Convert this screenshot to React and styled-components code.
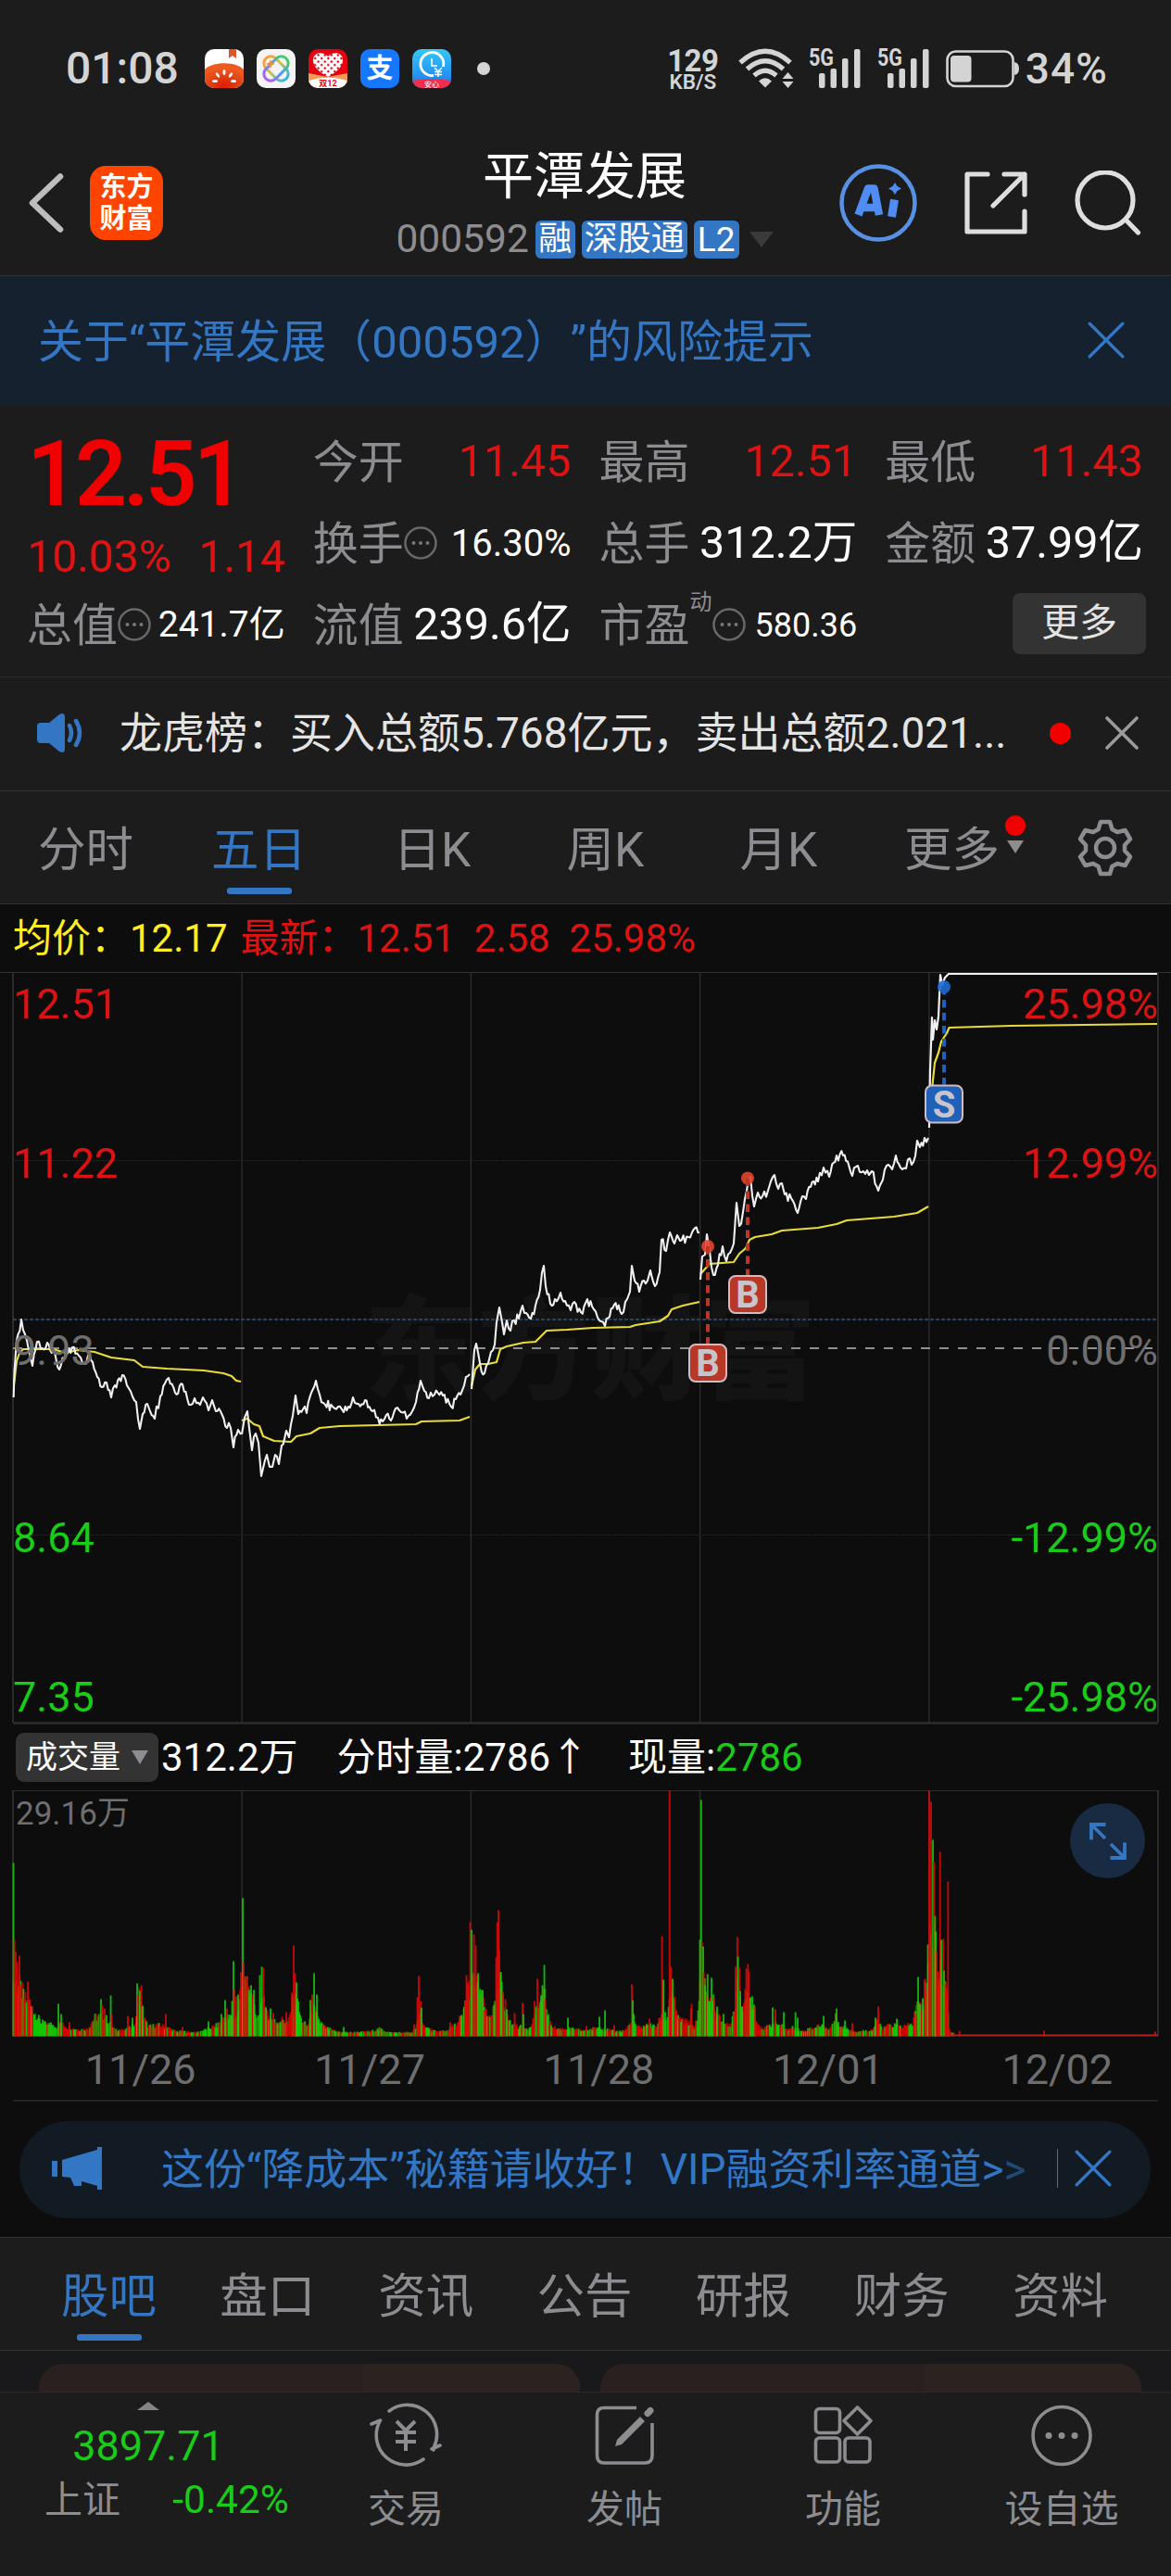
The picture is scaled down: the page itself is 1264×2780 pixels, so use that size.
import styled, { createGlobalStyle, css } from 'styled-components';

const GlobalStyle = createGlobalStyle`
  * {
    box-sizing: border-box;
  }

  body {
    margin: 0;
    background: #1c1c1c;
    font-family: Roboto, 'Noto Sans CJK SC', sans-serif;
    text-spacing-trim: space-all;
    color: #fff;
  }

  svg {
    display: block;
    flex-shrink: 0;
  }
`;

const BLUE = '#3376c4';
const RED = '#dd1212';
const GREEN = '#18cc18';
const GRAY = '#8c8c91';

const Screen = styled.div`
  width: 1264px;
  height: 2780px;
  display: flex;
  flex-direction: column;
  overflow: hidden;
  background: #0d0d0d;
  line-height: 1;
  white-space: nowrap;
`;

/* ---------- status bar ---------- */

const StatusBar = styled.div`
  height: 148px;
  display: flex;
  align-items: center;
  justify-content: space-between;
  padding: 0 68px 0 71px;
  background: #1c1c1c;
  color: #d4d4d4;
`;

const StatusGroup = styled.div`
  display: flex;
  align-items: center;
`;

const Clock = styled.span`
  width: 150px;
  font-size: 48px;
  font-weight: 500;
`;

const AppIcons = styled.div`
  display: flex;
  gap: 14px;
  margin-right: 28px;
`;

const Dot = styled.span`
  width: ${({ $size }) => $size}px;
  height: ${({ $size }) => $size}px;
  border-radius: 50%;
  background: ${({ $color }) => $color};
`;

const Speed = styled.div`
  display: flex;
  flex-direction: column;
  align-items: center;
  width: 56px;
  margin-right: 21px;
  font-weight: 700;
  font-size: 33px;
  line-height: 27px;
  letter-spacing: -0.5px;

  small {
    font-size: 22.5px;
    line-height: 18px;
    letter-spacing: 0;
    font-weight: 600;
  }
`;

const Percent = styled.span`
  margin-left: 7px;
  font-size: 46px;
  font-weight: 500;
  letter-spacing: 1px;
`;

/* ---------- header ---------- */

const Header = styled.header`
  height: 150px;
  display: grid;
  grid-template-columns: 1fr auto 1fr;
  padding: 10px 32px 0 30px;
  border-bottom: 1px solid #2b333c;
  background: #1c1c1c;
`;

const HeaderSide = styled.div`
  display: flex;
  height: 121px;
  align-items: center;
  justify-content: ${({ $end }) => ($end ? 'flex-end' : 'flex-start')};
`;

const Logo = styled.div`
  width: 79px;
  height: 80px;
  margin-left: 27px;
  padding-top: 6px;
  border-radius: 17px;
  background: #ff4400;
  text-align: center;
  font-size: 29px;
  font-weight: 700;
  line-height: 34px;
`;

const TitleBlock = styled.div`
  display: flex;
  flex-direction: column;
  align-items: center;
  padding-top: 1px;
`;

const Title = styled.h1`
  margin: 0;
  font-size: 55px;
  font-weight: 400;
  line-height: 62px;
`;

const SubTitle = styled.div`
  display: flex;
  align-items: center;
  gap: 7px;
  margin-top: 17px;
  height: 41px;
`;

const Code = styled.span`
  font-size: 42.5px;
  color: ${GRAY};
`;

const Tag = styled.span`
  height: 41px;
  padding: 0 3px;
  min-width: 43px;
  border-radius: 6px;
  background: ${BLUE};
  text-align: center;
  font-size: ${({ $latin }) => ($latin ? 37 : 36)}px;
  line-height: 41px;
  ${({ $latin }) => $latin && css`padding: 0 4px;`}
`;

const Triangle = styled.span`
  border-left: ${({ $w }) => $w / 2}px solid transparent;
  border-right: ${({ $w }) => $w / 2}px solid transparent;
  ${({ $up, $h, $color }) =>
    $up ? `border-bottom: ${$h}px solid ${$color};` : `border-top: ${$h}px solid ${$color};`}
`;

const TitleArrow = styled(Triangle)`
  margin-left: 4px;
`;

/* ---------- risk banner ---------- */

const Banner = styled.div`
  height: 140px;
  display: flex;
  align-items: center;
  justify-content: space-between;
  padding: 0 50px 3px 41px;
  background: #15212f;
  color: ${BLUE};
  font-size: 49px;
`;

const BannerText = styled.span`
  padding-top: 5px;
`;

/* ---------- quote ---------- */

const Quote = styled.section`
  height: 293px;
  display: grid;
  grid-template-columns: repeat(4, 1fr);
  grid-template-rows: repeat(3, 88px);
  column-gap: 30px;
  padding: 16px 30px 0 29px;
  border-bottom: 1px solid #292929;
  background: #1c1c1c;
`;

const PriceBlock = styled.div`
  grid-row: span 2;
  display: flex;
  flex-direction: column;
  color: ${RED};
`;

const Price = styled.div`
  height: 122px;
  font-size: 98px;
  font-weight: 600;
  line-height: 116px;
  letter-spacing: -4px;
  color: #f00000;
`;

const PriceChange = styled.div`
  display: flex;
  justify-content: space-between;
  font-size: 48px;
  line-height: 50px;
`;

const Cell = styled.div`
  display: flex;
  align-items: center;
`;

const CellLabel = styled.span`
  padding-top: 2px;
  font-size: 49px;
  color: ${GRAY};
`;

const CellValue = styled.span`
  margin-left: auto;
  padding-top: 1px;
  font-size: ${({ $size }) => $size || 48.5}px;
  color: ${({ $color }) => $color || '#fff'};
`;

const Sup = styled.sup`
  align-self: flex-start;
  width: 24px;
  margin-top: 8px;
  font-size: 24px;
  line-height: 24px;
  color: ${GRAY};
`;

const MoreButton = styled.button`
  width: 144px;
  height: 66px;
  margin: 0 -3px 3px auto;
  padding: 0;
  border: 0;
  border-radius: 8px;
  background: #333;
  color: #e4e4e4;
  font: inherit;
  font-size: 41px;
`;

/* ---------- news ---------- */

const News = styled.div`
  height: 123px;
  display: flex;
  align-items: center;
  justify-content: space-between;
  padding: 0 35px 2px 39px;
  border-bottom: 1px solid #323232;
  background: #1c1c1c;
`;

const NewsText = styled.span`
  width: 967px;
  font-size: 46px;
  color: #e4e4e4;
`;

/* ---------- tabs ---------- */

const Tabs = styled.nav`
  height: ${({ $h }) => $h}px;
  display: flex;
  padding: 0 ${({ $pad }) => $pad || 0}px;
  border-top: ${({ $top }) => ($top ? '1px solid #323232' : '0')};
  border-bottom: 1px solid #323232;
  background: #1c1c1c;
`;

const Tab = styled.div`
  position: relative;
  width: ${({ $w }) => $w}px;
  padding: 34px 2px 0 0;
  text-align: center;
  font-size: 51.5px;
  line-height: 60px;
  color: ${({ $active }) => ($active ? BLUE : GRAY)};

  ${({ $active }) =>
    $active &&
    css`
      &::after {
        content: '';
        position: absolute;
        left: 50%;
        bottom: 10px;
        width: 70px;
        height: 7px;
        margin-left: -36px;
        border-radius: 3px;
        background: ${BLUE};
      }
    `}
`;

const TabBadge = styled.span`
  position: absolute;
  top: 26px;
  right: 15px;
  display: flex;
  flex-direction: column;
  align-items: center;
  gap: 5px;
`;

const GearSlot = styled.div`
  display: flex;
  flex: 1;
  align-items: center;
  justify-content: center;
`;

/* ---------- chart ---------- */

const Legend = styled.div`
  height: 73px;
  display: flex;
  align-items: center;
  padding: 0 14px;
  font-size: 42px;
  white-space: pre;
  color: #ffee22;

  span {
    margin-left: 14px;
    color: ${RED};
  }
`;

const VolumeBar = styled.div`
  height: 71px;
  display: flex;
  align-items: center;
  padding: 0 17px 0;
  font-size: 42px;
`;

const VolumePicker = styled.div`
  width: 154px;
  height: 53px;
  display: flex;
  align-items: center;
  justify-content: space-between;
  margin-right: 3px;
  padding: 0 11px 1px 11px;
  border-radius: 9px;
  background: #333;
  font-size: 34px;
`;

const VolumeItem = styled.span`
  margin-right: ${({ $gap }) => $gap || 0}px;
  color: ${({ $color }) => $color || '#fff'};
`;

const VolumeWrap = styled.div`
  position: relative;
  height: 266px;
`;

const ExpandButton = styled.div`
  position: absolute;
  top: 14px;
  right: 28px;
  width: 81px;
  height: 81px;
  display: flex;
  align-items: center;
  justify-content: center;
  border-radius: 50%;
  background: #182b42;
`;

const Dates = styled.div`
  height: 70px;
  display: grid;
  grid-template-columns: repeat(5, 247.4px);
  margin: 0 14px;
  padding: 13px 0 0 14px;
  border-bottom: 2px solid #232323;
  text-align: center;
  font-size: 45px;
  line-height: 46px;
  color: #6e6e6e;
`;

/* ---------- promo ---------- */

const Promo = styled.div`
  height: 105px;
  display: flex;
  align-items: center;
  margin: 21px 22px 20px 21px;
  padding: 0 42px 3px 35px;
  border-radius: 54px;
  background: #121b24;
  color: ${BLUE};
`;

const PromoText = styled.span`
  width: 965px;
  margin-left: 64px;
  padding-top: 1px;
  font-size: 46px;

  i {
    font-style: normal;
    opacity: 0.5;
  }
`;

const PromoDivider = styled.span`
  width: 1px;
  height: 42px;
  margin: 0 18px 0 2px;
  background: ${BLUE};
`;

/* ---------- feed and bottom bar ---------- */

const Feed = styled.div`
  height: 44px;
  display: grid;
  grid-template-columns: 1fr 1fr;
  gap: 22px;
  padding: 14px 32px 0 42px;
  background: #19191b;
`;

const FeedCard = styled.div`
  border-radius: 26px 26px 0 0;
  background: linear-gradient(90deg, #2a201f 60%, #2c2321 60%);
`;

const BottomBar = styled.footer`
  flex: 1;
  display: flex;
  border-top: 1px solid #2a2a2a;
  background: #1c1c1c;
`;

const IndexBlock = styled.div`
  width: 320px;
  display: flex;
  flex-direction: column;
  align-items: center;
  padding-top: 10px;
  color: ${GREEN};
`;

const IndexValue = styled.div`
  margin-top: 16px;
  font-size: 45px;
  line-height: 46px;
`;

const IndexRow = styled.div`
  display: flex;
  width: 264px;
  align-items: center;
  justify-content: space-between;
  align-self: flex-start;
  margin: 11px 0 0 48px;
  font-size: 42.5px;
  line-height: 48px;

  span {
    font-size: 41px;
    color: ${GRAY};
  }
`;

const NavItem = styled.div`
  width: 236px;
  display: flex;
  flex-direction: column;
  align-items: center;
  padding-top: 7px;
  font-size: 41px;
  line-height: 48px;
  color: ${GRAY};

  svg {
    margin-bottom: 17px;
  }
`;

/* ---------- data ---------- */

const TOP = 1050;
const BOTTOM = 1859;
const LEFT = 14;
const RIGHT = 1250;
const DAY = (RIGHT - LEFT) / 5;

const days = ['11/26', '11/27', '11/28', '12/01', '12/02'];

const priceLines = [
  '14.7,1508 15.5,1480 18,1446 23,1424 27,1440 31,1457 35,1474 40,1448 46,1455 51,1449 59,1459 64,1478 71,1461 78,1454 85,1463 91,1472 95,1463 100,1470 105,1486 110,1497 115,1492 120,1508 124,1495 132,1484 137,1495 143,1507 147,1513 151,1542 154,1526 159,1515 162,1523 167,1531 173,1507 178,1493 182,1487 189,1503 197,1494 204,1516 210,1509 216,1516 219,1508 225,1522 229,1511 233,1523 238,1523 245,1541 249,1541 252,1562 257,1543 260,1548',
  '261,1548 264,1530 267,1523 269,1541 272,1565 276,1547 279,1557 282,1593 286,1576 288,1570 291,1583 294,1583 297,1570 301,1580 304,1560 309,1544 312,1551 316,1528 319,1506 322,1526 327,1521 331,1525 336,1503 341,1490 345,1505 351,1516 359,1518 365,1518 371,1524 376,1518 381,1508 387,1515 394,1511 402,1523 408,1530 413,1534 417,1527 422,1533 427,1520 433,1524 439,1531 445,1523 449,1513 454,1490 458,1501 463,1509 469,1505 478,1506 487,1518 492,1510 497,1505 503,1486 507,1483',
  '509,1499 512,1457 514,1450 518,1471 523,1482 527,1471 530,1459 534,1451 536,1427 539,1411 542,1427 544,1440 547,1425 551,1436 555,1425 560,1423 564,1409 568,1417 573,1423 578,1409 583,1392 587,1366 589,1388 594,1407 599,1402 605,1395 610,1404 616,1414 620,1405 627,1416 634,1402 641,1413 647,1425 653,1431 658,1421 663,1408 671,1418 677,1402 680,1394 682,1366 685,1382 690,1394 695,1382 699,1382 702,1371 707,1388 712,1373 714,1338 719,1350 723,1330 728,1342 731,1333 734,1339 743,1335 747,1330 755,1330',
  '756,1381 758,1356 761,1354 763,1332 766,1350 770,1376 775,1365 780,1345 784,1361 788,1352 792,1342 795,1298 798,1323 802,1308 806,1285 810,1270 814,1302 818,1287 823,1291 829,1285 832,1275 836,1268 840,1283 844,1277 847,1289 854,1293 861,1309 866,1291 870,1294 875,1281 883,1275 889,1260 895,1270 903,1247 910,1247 920,1269 926,1258 932,1264 938,1268 941,1264 948,1285 953,1273 957,1258 963,1262 967,1247 972,1260 978,1261 982,1250 986,1254 990,1231 993,1238 998,1228 1002,1228',
];

const lastPriceLine =
  '1003,1217 1004,1155 1006,1098 1007,1122 1009,1101 1011,1111 1013,1097 1015,1052 1017,1063 1020,1055 1024,1051 1249,1051';

const averageLines = [
  '15,1494 18,1469 21,1460 25,1456 57,1456 71,1460 84,1457 102,1459 120,1465 145,1468 154,1475 180,1477 220,1479 241,1482 250,1485 255,1490 260,1491',
  '261,1533 267,1531 274,1537 280,1539 284,1550 296,1555 314,1556 320,1550 335,1547 345,1541 367,1539 449,1537 455,1534 496,1533 507,1529',
  '509,1496 513,1478 518,1472 527,1472 536,1470 540,1456 547,1453 565,1449 578,1448 590,1436 612,1435 640,1433 680,1432 686,1430 712,1426 721,1420 725,1413 737,1409 755,1405',
  '756,1375 766,1364 792,1362 798,1353 805,1347 809,1338 815,1335 833,1332 844,1328 883,1325 903,1321 914,1317 965,1313 990,1309 1002,1302',
  '1003,1208 1007,1166 1009,1147 1013,1136 1016,1124 1022,1115 1024.5,1109 1092,1107 1249,1105',
];

const marks = [
  { label: 'B', x: 764, y: 1345, box: 1450, color: '#b93727' },
  { label: 'B', x: 807, y: 1271.5, box: 1376, color: '#b93727' },
  { label: 'S', x: 1019, y: 1065, box: 1170.5, color: '#1f61b8' },
];

const priceLabels = [
  { price: '12.51', pct: '25.98%', y: 1099, color: RED },
  { price: '11.22', pct: '12.99%', y: 1271, color: RED },
  { price: '9.93', pct: '0.00%', y: 1473, color: '#6e6e6e' },
  { price: '8.64', pct: '-12.99%', y: 1675, color: GREEN },
  { price: '7.35', pct: '-25.98%', y: 1847, color: GREEN },
];

// usual minute volume as [x, height], interpolated between the points
const volumeBase = [
  [14, 60], [22, 52], [28, 38], [35, 28], [45, 14], [60, 10], [66, 14], [72, 10], [85, 7], [95, 8],
  [102, 20], [110, 22], [116, 18], [122, 8], [135, 6], [140, 10], [146, 12], [150, 45], [154, 22],
  [160, 10], [170, 12], [180, 10], [190, 5], [200, 5], [212, 4], [222, 7], [235, 12], [242, 20],
  [250, 20], [256, 20], [261, 60], [270, 45], [276, 24], [280, 20], [284, 40], [290, 20], [298, 15],
  [305, 18], [311, 14], [316, 35], [320, 40], [325, 18], [332, 10], [338, 30], [343, 18], [350, 10],
  [362, 5], [380, 4], [400, 5], [410, 8], [420, 4], [445, 4], [449, 10], [454, 25], [458, 10],
  [470, 5], [482, 6], [495, 14], [500, 24], [505, 50], [512, 60], [520, 40], [526, 20], [534, 30],
  [540, 60], [546, 22], [553, 12], [560, 10], [566, 10], [572, 8], [578, 24], [587, 45], [593, 14],
  [600, 8], [615, 8], [630, 6], [640, 8], [648, 10], [655, 7], [665, 5], [674, 6], [682, 15],
  [690, 9], [700, 12], [708, 10], [714, 20], [720, 18], [724, 50], [730, 20], [738, 16], [745, 14],
  [752, 8], [757, 70], [765, 38], [772, 25], [780, 15], [788, 11], [793, 30], [797, 60], [802, 25],
  [807, 45], [812, 32], [817, 14], [825, 8], [835, 14], [842, 12], [850, 7], [858, 10], [865, 5],
  [878, 9], [887, 12], [895, 7], [902, 20], [908, 10], [915, 8], [925, 5], [935, 6], [942, 7],
  [947, 16], [953, 8], [960, 11], [966, 12], [975, 10], [985, 13], [990, 35], [996, 30], [1001, 60],
  [1003, 100], [1008, 110], [1012, 60], [1017, 70], [1022, 45], [1024, 10], [1026, 5], [1030, 3],
  [1040, 1],
];

// minutes that stand out: x, height, r(ed) or g(reen)
const volumeSpikes =
  '14.5,187,g 15.5,104,r 17,91,r 18.5,80,r 21,87,r 22,55,r 30,59,r 32,40,r 35,32,r 46,18,g 55,15,g 63,35,g 66,24,g 75,15,r 109,40,g 110,34,r 113,30,r 119.5,44,g 120.5,24,r 138,22,r 143,20,g 148,57,g 149,45,r 151,49,g 152.5,55,r 154,33,g 179,24,r 197,10,r 225,16,g 239,24,g 243,39,g 245,30,r 249,22,g 250.5,38,g 252,81,g 253,51,r 255,43,r 257,45,g 260,69,r ' +
  '262,149,g 263,80,r 265,64,r 267,65,r 269,50,g 271,55,g 274,50,g 280.5,66,g 282.5,75,g 284,74,r 285,44,r 287,31,g 292,30,g 295,25,r 309,26,r 315,47,r 317,98,r 318.5,68,r 320,58,g 321,41,g 335,39,g 337,45,r 339,68,g 342,45,g 344,19,g 371,10,g 447,13,r 450.5,42,r 452,65,r 454,38,r 455,31,g 486,15,r 496,22,r 501,32,g 502,38,r 503.5,66,r 504.5,58,r 507.5,123,r ' +
  '509,115,g 511.5,110,r 513.5,98,r 516,68,g 518,51,g 521,50,g 523,28,r 535.5,85,r 536.7,123,r 538,136,r 539,93,r 540.5,69,g 541.6,59,g 543,48,r 545.5,40,r 547,29,g 555.5,25,r 564,36,r 565,24,g 577,38,r 580,62,r 584,44,g 585.5,55,g 587.5,77,g 588.5,40,r 591,22,g 613,20,g 633,11,r 647,21,g 653,28,g 663,12,r 682,56,r 683,39,g 684,24,g 701,19,r 712,20,r 714.5,108,r 716,61,g 718,26,g 722.7,265,r 724,75,r 726,62,g 728,43,r 730,28,r 745.7,30,r 746.5,35,r 751,17,r ' +
  '755.5,104,g 756.8,255,g 757.6,102,r 759,97,g 759.6,69,r 761,55,g 763.7,67,g 766,38,g 768,63,g 770,45,g 771,42,r 774,32,g 781,24,g 792,25,r 794,75,r 795.8,107,r 796.6,86,g 798,74,r 799,49,g 801,32,g 804.4,51,r 805.6,73,r 807.3,78,r 808,70,r 810,42,g 812,43,g 814,34,g 815,32,r 834,31,g 837,29,r 846,26,g 858.6,26,g 861,20,g 889,22,g 902.5,25,r 903,30,g 912,17,g 920,14,r 945,20,g 948,32,r 958,13,r 968,19,g 989,24,r 990,36,r 991,64,g 993,35,g 996,41,g 998,60,r 998.6,62,r 1001.5,99,g ' +
  '1003,265,r 1005,253,r 1007,212,g 1008,188,r 1009.3,130,g 1010,113,g 1011,92,r 1012.6,70,r 1014.7,199,r 1016,104,g 1018,105,r 1019,71,g 1020.4,57,r 1022,52,r 1023.3,167,r 1035.6,6,r 1127,6,r 1247,5,r';

const rand = (n) => {
  const v = Math.sin(n * 12.9898) * 43758.5453;
  return v - Math.floor(v);
};

// adds the minute-by-minute jitter between two turning points
const roughen = (line, seed) => {
  const points = line.split(' ').map((p) => p.split(',').map(Number));
  const out = [];
  points.forEach(([x, y], i) => {
    out.push(`${x},${y}`);
    const next = points[i + 1];
    if (!next) return;
    const steps = Math.floor((next[0] - x) / 1.6);
    for (let s = 1; s < steps; s++) {
      const t = s / steps;
      const noise = (rand(seed + i * 17 + s) - 0.5) * 11;
      out.push(`${(x + (next[0] - x) * t).toFixed(1)},${(y + (next[1] - y) * t + noise).toFixed(1)}`);
    }
  });
  return out.join(' ');
};

const baseHeight = (x) => {
  const i = volumeBase.findIndex(([bx]) => bx > x);
  if (i < 1) return 1;
  const [x0, h0] = volumeBase[i - 1];
  const [x1, h1] = volumeBase[i];
  return h0 + ((h1 - h0) * (x - x0)) / (x1 - x0);
};

const volumeBars = [];
for (let i = 0; LEFT + i * 1.03 < 1030; i++) {
  const x = LEFT + i * 1.03;
  volumeBars.push({
    x,
    h: baseHeight(x) * (0.75 + rand(i + 3) * 0.5),
    color: rand(i * 3 + 1) > 0.5 ? '#e60000' : '#12d400',
    opacity: 0.8,
  });
}
volumeSpikes.split(' ').forEach((spike) => {
  const [x, h, c] = spike.split(',');
  volumeBars.push({ x: +x, h: +h, color: c === 'r' ? '#e00808' : '#14cc0c', opacity: 0.85 });
});

/* ---------- icons ---------- */

const CloseIcon = ({ size, color, width = 3 }) => (
  <svg width={size} height={size} viewBox="0 0 36 36" stroke={color} strokeWidth={width} strokeLinecap="round">
    <path d="M2 2L34 34M34 2L2 34" />
  </svg>
);

const MoreDots = () => (
  <svg width="36" height="36" viewBox="0 0 36 36">
    <circle cx="18" cy="18" r="16.5" fill="none" stroke="#68686b" strokeWidth="2.5" />
    <circle cx="10.5" cy="18" r="2" fill="#77777a" />
    <circle cx="18" cy="18" r="2" fill="#77777a" />
    <circle cx="25.5" cy="18" r="2" fill="#77777a" />
  </svg>
);

const TomatoIcon = () => (
  <svg width="42" height="42" viewBox="0 0 42 42">
    <defs>
      <clipPath id="tomatoClip">
        <rect width="42" height="42" rx="10" />
      </clipPath>
      <radialGradient id="tomato" cx="0.5" cy="0.9" r="0.7">
        <stop offset="0" stopColor="#d81e06" />
        <stop offset="1" stopColor="#ee5a1e" />
      </radialGradient>
    </defs>
    <g clipPath="url(#tomatoClip)">
      <rect width="42" height="42" fill="#fff" />
      <path d="M26 0h8v10l-4-3-4 3z" fill="#e0562a" />
      <path d="M0 22C8 13 34 13 42 22V42H0z" fill="url(#tomato)" />
      <g fill="#fff">
        <ellipse cx="21" cy="25" rx="1.5" ry="3" />
        <ellipse cx="14" cy="28" rx="1.5" ry="3" transform="rotate(-35 14 28)" />
        <ellipse cx="28" cy="28" rx="1.5" ry="3" transform="rotate(35 28 28)" />
        <ellipse cx="11" cy="34.5" rx="3" ry="1.5" />
        <ellipse cx="31" cy="34.5" rx="3" ry="1.5" />
      </g>
    </g>
  </svg>
);

const KnotIcon = () => (
  <svg width="42" height="42" viewBox="0 0 42 42">
    <defs>
      <linearGradient id="knotA" x1="0" y1="0" x2="1" y2="0">
        <stop offset="0" stopColor="#ff9a3d" />
        <stop offset="0.5" stopColor="#c3c845" />
        <stop offset="1" stopColor="#2fb5e8" />
      </linearGradient>
      <linearGradient id="knotB" x1="0" y1="0" x2="1" y2="0">
        <stop offset="0" stopColor="#b05cf0" />
        <stop offset="0.5" stopColor="#4a9dff" />
        <stop offset="1" stopColor="#42cf5c" />
      </linearGradient>
    </defs>
    <rect width="42" height="42" rx="10" fill="#f4f3f5" />
    <g fill="none" strokeWidth="3">
      <rect x="5.5" y="13.5" width="31" height="15" rx="7.5" stroke="url(#knotA)" transform="rotate(45 21 21)" />
      <rect x="5.5" y="13.5" width="31" height="15" rx="7.5" stroke="url(#knotB)" transform="rotate(-45 21 21)" />
    </g>
    <path d="M15 11l1.5 3.5 3.5 1.500-3.500 1.500-1.500 3.500-1.500-3.500-3.500-1.500 3.500-1.500z" fill="#f58a3c" />
  </svg>
);

const HeartIcon = () => (
  <svg width="42" height="42" viewBox="0 0 42 42">
    <defs>
      <clipPath id="heartClip">
        <rect width="42" height="42" rx="10" />
      </clipPath>
      <pattern id="lattice" width="5" height="5" patternUnits="userSpaceOnUse" patternTransform="rotate(45)">
        <rect width="5" height="5" fill="#fff" />
        <rect x="1" y="1" width="2.2" height="2.2" fill="#e60012" />
      </pattern>
    </defs>
    <g clipPath="url(#heartClip)">
      <rect width="42" height="42" fill="#e60012" />
      <path d="M0 26L21 30L42 26V42H0z" fill="#f39a55" />
      <path d="M0 34Q21 27 42 34V42H0z" fill="#fff" />
      <path d="M21 30C10 24 5 18 5 12C5 3 16 2 21 8C26 2 37 3 37 12C37 18 32 24 21 30z" fill="url(#lattice)" />
      <text x="21" y="39.5" textAnchor="middle" fontSize="9" fontWeight="700" fill="#e60012">双12</text>
    </g>
  </svg>
);

const AlipayIcon = () => (
  <svg width="42" height="42" viewBox="0 0 42 42">
    <rect width="42" height="42" rx="10" fill="#1677ff" />
    <text x="21" y="31" textAnchor="middle" fontSize="29" fontWeight="700" fill="#fff">支</text>
  </svg>
);

const ClockPayIcon = () => (
  <svg width="42" height="42" viewBox="0 0 42 42">
    <defs>
      <clipPath id="clockClip">
        <rect width="42" height="42" rx="10" />
      </clipPath>
      <linearGradient id="clockBg" x1="0" y1="0" x2="0" y2="1">
        <stop offset="0" stopColor="#35c8f8" />
        <stop offset="1" stopColor="#1b78ee" />
      </linearGradient>
    </defs>
    <g clipPath="url(#clockClip)">
      <rect width="42" height="42" fill="url(#clockBg)" />
      <path d="M33.5 19A12.5 12.5 0 1 0 23 28.5" fill="none" stroke="#fff" strokeWidth="2.8" />
      <path d="M21 10v8h6" fill="none" stroke="#fff" strokeWidth="1.6" />
      <path d="M24 20l4 4 4-4M28 24v6M24 24.5h8M24 27.5h8" fill="none" stroke="#fff" strokeWidth="1.5" />
      <path d="M0 34Q21 30 42 34V42H0z" fill="#f32d4a" />
      <text x="21" y="40.5" textAnchor="middle" fontSize="8" fill="#fff">安心</text>
    </g>
  </svg>
);

const WifiIcon = styled.svg.attrs({ width: 62, height: 44, viewBox: '0 0 62 44' })`
  margin-right: 14px;
  fill: none;
  stroke: #d4d4d4;
  stroke-width: 5.2px;
`;

const SignalSvg = styled.svg`
  margin: -10px 18px 0 0;
  fill: #d4d4d4;
`;

const SignalIcon = () => (
  <SignalSvg width="56" height="54" viewBox="0 -10 56 54">
    <text x="0" y="18.5" fontSize="25" fontWeight="700" textLength="27" lengthAdjust="spacingAndGlyphs">5G</text>
    <rect x="11" y="27" width="6.5" height="16" rx="2" />
    <rect x="23.5" y="22" width="6.5" height="21" rx="2" />
    <rect x="36" y="11" width="6.5" height="32" rx="2" />
    <rect x="49" y="1" width="6.5" height="42" rx="2" />
  </SignalSvg>
);

const BatteryIcon = () => (
  <svg width="79" height="42" viewBox="0 0 79 42" fill="#d4d4d4">
    <rect x="1.5" y="2.5" width="71" height="37.5" rx="9" fill="none" stroke="#d4d4d4" strokeWidth="2.6" />
    <rect x="5" y="7" width="22.5" height="28.5" rx="4" />
    <path d="M74 14q5 1 5 7t-5 7z" />
  </svg>
);

const BackIcon = () => (
  <svg width="40" height="66" viewBox="0 0 40 66" fill="none" stroke="#bdbdbd" strokeWidth="6.5" strokeLinecap="round" strokeLinejoin="round">
    <path d="M35 4.500L5 33L35 61.500" />
  </svg>
);

const HeaderActions = styled.div`
  display: flex;
  align-items: center;
  gap: 51px;
`;

const AiIcon = () => (
  <svg width="84" height="84" viewBox="0 0 84 84">
    <circle cx="42" cy="42" r="39.5" fill="none" stroke="#5891e4" strokeWidth="4.5" />
    <g fill="none" stroke="#4f8df2" strokeLinejoin="round">
      <path d="M20.5 55L31 26.5H37.5L43 55M26 47H41" strokeWidth="8.5" />
      <path d="M59.5 38.5L56.5 57" strokeWidth="9" />
    </g>
    <path d="M60 20l2.500 4 4.500 2.500-4.500 2.500-2.500 4-2.500-4-4.500-2.500 4.500-2.500z" fill="#4f8df2" />
  </svg>
);

const ShareIcon = () => (
  <svg width="68" height="68" viewBox="0 0 68 68" fill="none" stroke="#dedede" strokeWidth="5.2" strokeLinecap="round" strokeLinejoin="round">
    <path d="M25 3H3V65H65V43" />
    <path d="M43 3H65V25M65 3L31 37" />
  </svg>
);

const SearchIcon = () => (
  <svg width="72" height="70" viewBox="0 0 72 70" fill="none" stroke="#dedede" strokeWidth="5.2" strokeLinecap="round">
    <circle cx="33" cy="32" r="30" />
    <path d="M55 53L68.500 67" />
  </svg>
);

const SpeakerIcon = () => (
  <svg width="53" height="44" viewBox="0 0 53 44" fill={BLUE}>
    <path d="M5 11H14L25 2Q31 -1 31 5V39Q31 45 25 42L14 33H5Q1 33 1 29V15Q1 11 5 11z" />
    <path d="M36 14Q40 22 36 30M43 9Q51 22 43 35" fill="none" stroke={BLUE} strokeWidth="4.5" strokeLinecap="round" />
  </svg>
);

const GearIcon = () => (
  <svg width="62" height="62" viewBox="0 0 62 62" fill="none" stroke={GRAY} strokeWidth="4.5" strokeLinejoin="round">
    <path d="M26 3H36L38.5 11L44 14L52.5 12L58 21.5L52 28V34L58 40.5L52.5 50L44 48L38.5 51L36 59H26L23.5 51L18 48L9.5 50L4 40.5L10 34V28L4 21.5L9.5 12L18 14L23.5 11z" />
    <circle cx="31" cy="31" r="10" />
  </svg>
);

const ExpandIcon = () => (
  <svg width="42" height="42" viewBox="0 0 42 42" fill="none" stroke={BLUE} strokeWidth="3.8">
    <path d="M18.5 3H3V19.5M3 3L18 18M23.5 39H39V22.5M39 39L24 24" />
  </svg>
);

const MegaphoneIcon = () => (
  <svg width="54" height="46" viewBox="0 0 54 46" fill={BLUE}>
    <rect x="0" y="15" width="6" height="17" />
    <path d="M11 14L49 3V0H54V46H49V42L32 37V42H24L20 33L11 32z" />
  </svg>
);

const TradeIcon = () => (
  <svg width="78" height="78" viewBox="0 0 78 78" fill="none" stroke={GRAY} strokeWidth="3.6" strokeLinecap="round" strokeLinejoin="round">
    <path d="M21 13A32 32 0 0 1 69 53M69 55L67 54L76 50M69 53L67.5 54" />
    <path d="M58 65A32 32 0 0 1 11 24M2 27L11.5 23" />
    <path d="M29 24L39 34L49 24M28 36H50M28 46H50M39 35V56" strokeLinecap="butt" strokeWidth="4" />
  </svg>
);

const PostIcon = () => (
  <svg width="78" height="78" viewBox="0 0 78 78" fill="none" stroke={GRAY} strokeWidth="3.6">
    <path d="M52 9.5H17Q9.5 9.5 9.5 17V61Q9.5 69 17 69H61Q69 69 69 61V26" />
    <path d="M56 19L61 24L36 49L29 51L31 44z" fill={GRAY} stroke="none" />
    <path d="M64 15.5L67 12.5" strokeWidth="7" strokeLinecap="round" />
  </svg>
);

const GridIcon = () => (
  <svg width="78" height="78" viewBox="0 0 78 78" fill="none" stroke={GRAY} strokeWidth="3.6" strokeLinejoin="round">
    <rect x="9.5" y="10.5" width="26" height="26" rx="4" />
    <rect x="9.5" y="42" width="26" height="26" rx="4" />
    <rect x="41" y="42" width="27" height="26" rx="4" />
    <path d="M54.5 9L69 23.5L54.5 38L40 23.5z" />
  </svg>
);

const OptionalIcon = () => (
  <svg width="78" height="78" viewBox="0 0 78 78" fill={GRAY}>
    <circle cx="39" cy="39.5" r="31" fill="none" stroke={GRAY} strokeWidth="3.6" />
    <circle cx="25" cy="39.5" r="3.5" />
    <circle cx="39" cy="39.5" r="3.5" />
    <circle cx="53" cy="39.5" r="3.5" />
  </svg>
);

/* ---------- charts ---------- */

const GridLines = ({ top, bottom }) => (
  <g stroke="#2b2b2b" strokeWidth="1.5">
    {[1, 2, 3, 4].map((i) => (
      <line key={i} x1={LEFT + DAY * i} x2={LEFT + DAY * i} y1={top} y2={bottom} />
    ))}
    <line x1={LEFT} x2={LEFT} y1={top} y2={bottom} strokeWidth="2" />
    <line x1={RIGHT} x2={RIGHT} y1={top} y2={bottom} strokeWidth="2" />
  </g>
);

const PriceChart = () => (
  <svg width="1264" height="812" viewBox="0 1049 1264 812">
    <text x="393" y="1500" fontSize="122" fontWeight="900" fill="#141414" fontFamily="Noto Sans CJK SC">东方财富</text>
    <line x1="0" x2="1264" y1="1049.5" y2="1049.5" stroke="#333" />
    <GridLines top={TOP} bottom={BOTTOM} />
    <line x1={LEFT} x2={RIGHT} y1="1252.5" y2="1252.5" stroke="#242424" strokeDasharray="2 1" />
    <line x1={LEFT} x2={RIGHT} y1="1656.5" y2="1656.5" stroke="#242424" strokeDasharray="2 1" />
    <line x1={LEFT} x2={RIGHT} y1="1859.5" y2="1859.5" stroke="#2c2c2c" strokeWidth="2.5" />
    <line x1={LEFT} x2={RIGHT} y1="1455" y2="1455" stroke="#8f8f8f" strokeWidth="2" strokeDasharray="10 10" />
    <line x1={LEFT} x2={RIGHT} y1="1424" y2="1424" stroke="#28435d" strokeWidth="1.8" strokeDasharray="4 2" />
    <g fill="none" strokeLinejoin="round">
      {averageLines.map((line) => (
        <polyline key={line} points={line} stroke="#e9dc3a" strokeWidth="2.2" />
      ))}
      {priceLines.map((line, i) => (
        <polyline key={line} points={roughen(line, i * 101)} stroke="#f0f0f0" strokeWidth="2.1" />
      ))}
      <polyline points={lastPriceLine} stroke="#f0f0f0" strokeWidth="2.2" />
    </g>
    {priceLabels.map(({ price, pct, y, color }) => (
      <g key={pct} fontSize="45" fill={color}>
        <text x="14" y={y}>{price}</text>
        <text x="1250" y={y} textAnchor="end">{pct}</text>
      </g>
    ))}
    {marks.map(({ label, x, y, box, color }) => (
      <g key={x}>
        <circle cx={x} cy={y} r="7" fill={label === 'B' ? '#e5432f' : '#1e6bd6'} opacity="0.9" />
        <line x1={x} x2={x} y1={y} y2={box} stroke={color} strokeWidth="4" strokeDasharray="8.5 5.5" />
        <rect x={x - 20} y={box + 1} width="40" height="40" rx="7" fill={color} stroke="#d3bcc0" strokeWidth="2" />
        <text x={x} y={box + 35} textAnchor="middle" fontSize="40" fontWeight="700" fill="#c9c3cb">{label}</text>
      </g>
    ))}
  </svg>
);

const VolumeChart = () => (
  <svg width="1264" height="266" viewBox="0 0 1264 266">
    <line x1={LEFT} x2={RIGHT} y1="0.5" y2="0.5" stroke="#2b2b2b" />
    <GridLines top={0} bottom={265} />
    {volumeBars.map(({ x, h, color, opacity }, i) => (
      <rect key={i} x={x - 0.9} y={265.5 - h} width="1.9" height={h} fill={color} opacity={opacity} />
    ))}
    <rect x="1022" y="263.5" width="228" height="2" fill="#b3201f" />
    <text x="17" y="37" fontSize="35" fill="#6e6e6e">29.16万</text>
  </svg>
);

const App = () => {
  return (
    <Screen>
      <GlobalStyle />
      <StatusBar>
        <StatusGroup>
          <Clock>01:08</Clock>
          <AppIcons>
            <TomatoIcon />
            <KnotIcon />
            <HeartIcon />
            <AlipayIcon />
            <ClockPayIcon />
          </AppIcons>
          <Dot $size={14} $color="#d4d4d4" />
        </StatusGroup>
        <StatusGroup>
          <Speed>
            129
            <small>KB/S</small>
          </Speed>
          <WifiIcon>
            <path d="M2 15.5Q29 -9 56 15.5" />
            <path d="M9.5 22.5Q29 5 48.5 22.5" />
            <path d="M17 29.5Q29 19 41 29.5" />
            <path d="M22 35.5Q29 29 36 35.5L29 42.5z" fill="#d4d4d4" stroke="none" />
            <path d="M53.5 26l6 7h-12zM53.5 43l6-7h-12z" fill="#d4d4d4" stroke="none" />
          </WifiIcon>
          <SignalIcon />
          <SignalIcon />
          <BatteryIcon />
          <Percent>34%</Percent>
        </StatusGroup>
      </StatusBar>

      <Header>
        <HeaderSide>
          <BackIcon />
          <Logo>
            东方
            <br />
            财富
          </Logo>
        </HeaderSide>
        <TitleBlock>
          <Title>平潭发展</Title>
          <SubTitle>
            <Code>000592</Code>
            <Tag>融</Tag>
            <Tag>深股通</Tag>
            <Tag $latin>L2</Tag>
            <TitleArrow $w={26} $h={17} $color="#3a3a3a" />
          </SubTitle>
        </TitleBlock>
        <HeaderSide $end>
          <HeaderActions>
            <AiIcon />
            <ShareIcon />
            <SearchIcon />
          </HeaderActions>
        </HeaderSide>
      </Header>

      <Banner>
        <BannerText>关于“平潭发展（000592）”的风险提示</BannerText>
        <CloseIcon size={40} color={BLUE} />
      </Banner>

      <Quote>
        <PriceBlock>
          <Price>12.51</Price>
          <PriceChange>
            <span>10.03%</span>
            <span>1.14</span>
          </PriceChange>
        </PriceBlock>
        <Cell>
          <CellLabel>今开</CellLabel>
          <CellValue $color={RED}>11.45</CellValue>
        </Cell>
        <Cell>
          <CellLabel>最高</CellLabel>
          <CellValue $color={RED}>12.51</CellValue>
        </Cell>
        <Cell>
          <CellLabel>最低</CellLabel>
          <CellValue $color={RED}>11.43</CellValue>
        </Cell>
        <Cell>
          <CellLabel>换手</CellLabel>
          <MoreDots />
          <CellValue $size={40}>16.30%</CellValue>
        </Cell>
        <Cell>
          <CellLabel>总手</CellLabel>
          <CellValue>312.2万</CellValue>
        </Cell>
        <Cell>
          <CellLabel>金额</CellLabel>
          <CellValue>37.99亿</CellValue>
        </Cell>
        <Cell>
          <CellLabel>总值</CellLabel>
          <MoreDots />
          <CellValue $size={39}>241.7亿</CellValue>
        </Cell>
        <Cell>
          <CellLabel>流值</CellLabel>
          <CellValue>239.6亿</CellValue>
        </Cell>
        <Cell>
          <CellLabel>市盈</CellLabel>
          <Sup>动</Sup>
          <MoreDots />
          <CellValue $size={36}>580.36</CellValue>
        </Cell>
        <Cell>
          <MoreButton>更多</MoreButton>
        </Cell>
      </Quote>

      <News>
        <SpeakerIcon />
        <NewsText>龙虎榜：买入总额5.768亿元，卖出总额2.021...</NewsText>
        <Dot $size={23} $color="#f00000" />
        <CloseIcon size={36} color="#9a9a9a" width={3.6} />
      </News>

      <Tabs $h={122}>
        <Tab $w={187}>分时</Tab>
        <Tab $w={187} $active>五日</Tab>
        <Tab $w={187}>日K</Tab>
        <Tab $w={187}>周K</Tab>
        <Tab $w={187}>月K</Tab>
        <Tab $w={187}>
          更多
          <TabBadge>
            <Dot $size={22} $color="#f00000" />
            <Triangle $w={18} $h={14} $color={GRAY} />
          </TabBadge>
        </Tab>
        <GearSlot>
          <GearIcon />
        </GearSlot>
      </Tabs>

      <Legend>
        均价：12.17<span>最新：12.51  2.58  25.98%</span>
      </Legend>
      <PriceChart />

      <VolumeBar>
        <VolumePicker>
          成交量
          <Triangle $w={18} $h={15} $color={GRAY} />
        </VolumePicker>
        <VolumeItem $gap={42}>312.2万</VolumeItem>
        <VolumeItem $gap={42}>分时量:2786↑</VolumeItem>
        <VolumeItem>现量:</VolumeItem>
        <VolumeItem $color={GREEN}>2786</VolumeItem>
      </VolumeBar>
      <VolumeWrap>
        <VolumeChart />
        <ExpandButton>
          <ExpandIcon />
        </ExpandButton>
      </VolumeWrap>
      <Dates>
        {days.map((day) => (
          <span key={day}>{day}</span>
        ))}
      </Dates>

      <Promo>
        <MegaphoneIcon />
        <PromoText>
          这份“降成本”秘籍请收好！VIP融资利率通道&gt;<i>&gt;</i>
        </PromoText>
        <PromoDivider />
        <CloseIcon size={40} color={BLUE} />
      </Promo>

      <Tabs $h={123} $pad={33} $top>
        {['股吧', '盘口', '资讯', '公告', '研报', '财务', '资料'].map((name, i) => (
          <Tab key={name} $w={171.2} $active={i === 0}>
            {name}
          </Tab>
        ))}
      </Tabs>

      <Feed>
        <FeedCard />
        <FeedCard />
      </Feed>

      <BottomBar>
        <IndexBlock>
          <Triangle $up $w={25} $h={9} $color="#858585" />
          <IndexValue>3897.71</IndexValue>
          <IndexRow>
            <span>上证</span>
            -0.42%
          </IndexRow>
        </IndexBlock>
        <NavItem>
          <TradeIcon />
          交易
        </NavItem>
        <NavItem>
          <PostIcon />
          发帖
        </NavItem>
        <NavItem>
          <GridIcon />
          功能
        </NavItem>
        <NavItem>
          <OptionalIcon />
          设自选
        </NavItem>
      </BottomBar>
    </Screen>
  );
};

export default App;
